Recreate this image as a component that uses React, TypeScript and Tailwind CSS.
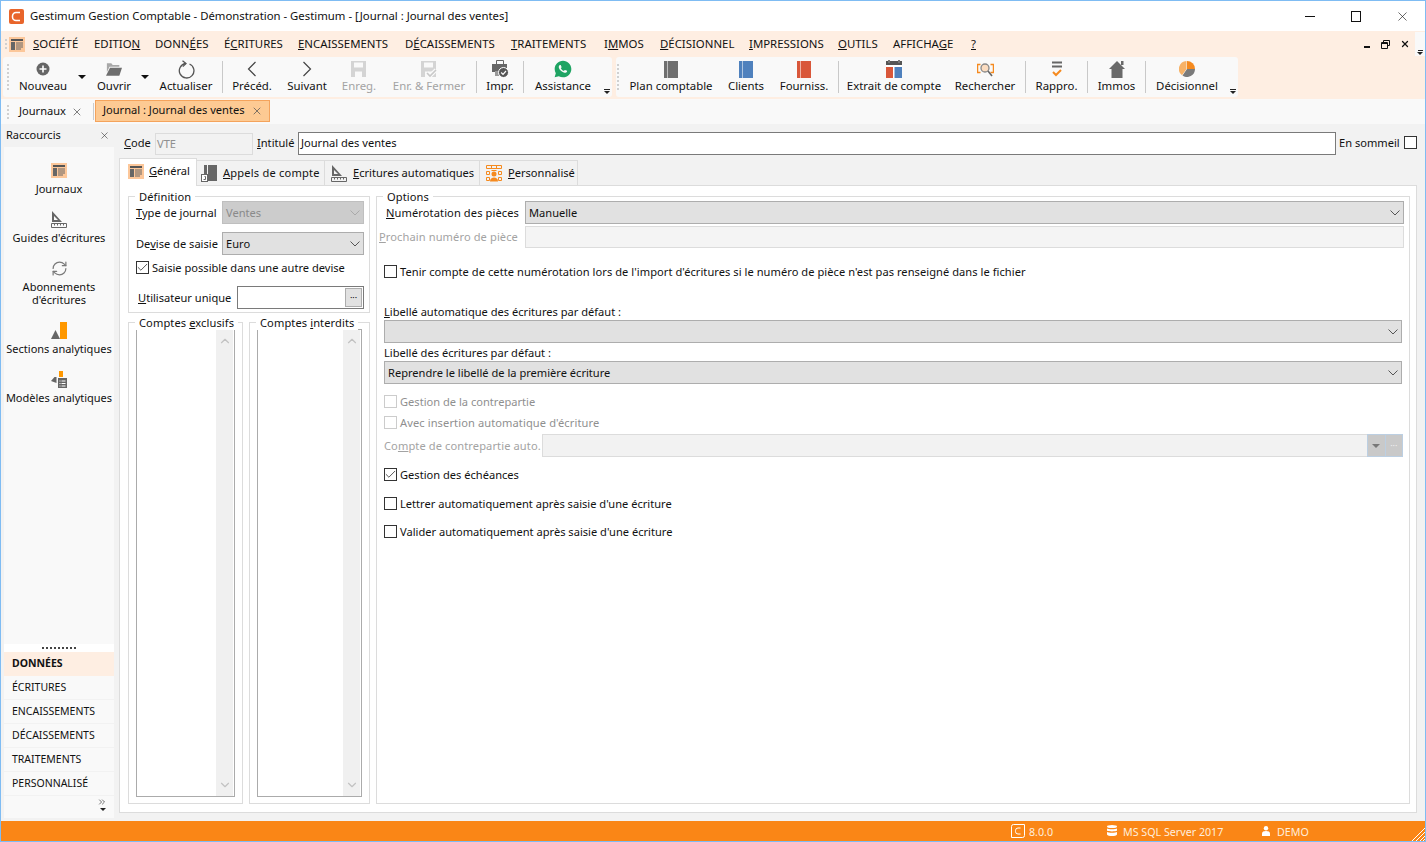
import React from 'react';
import { ChevronDown, ChevronUp, RefreshCw, X, Check, ChevronsRight } from 'lucide-react';
import { RiWhatsappFill } from 'react-icons/ri';

const JournalIcon = ({ solid = true }: { solid?: boolean }) => (
  <svg width="16" height="15" viewBox="0 0 16 15">
    {solid && <rect width="16" height="15" fill="#fcc79a" />}
    <rect x="2" y="2" width="12" height="2" fill="#555" />
    <rect x="2" y="5" width="4" height="8" fill="#666" />
    <path d="M7 6h7M7 8h7M7 10h7M7 12h5" stroke="#666" strokeWidth="1" />
  </svg>
);

const GuideIcon = () => (
  <svg width="16" height="17" viewBox="0 0 16 17">
    <path d="M1 0v11h10z M3 5v4h4z" fill="#666" fillRule="evenodd" />
    <path d="M.5 12.500h15v4H.5z" fill="none" stroke="#666" />
    <path d="M3.500 13v1.500M6.500 13v1.500M9.500 13v1.500M12.500 13v1.500" stroke="#666" />
  </svg>
);

const SectionsIcon = () => (
  <svg width="16" height="17" viewBox="0 0 16 17">
    <path d="M0 17l4.500-9 4.500 9z" fill="#666" />
    <rect x="9" y="0" width="7" height="17" fill="#ff9800" />
  </svg>
);

const ModelsIcon = () => (
  <svg width="16" height="17" viewBox="0 0 16 17">
    <rect x="8" y="0" width="4" height="6" fill="#ff9800" />
    <path d="M0 10l3.500-4 2 0v6z" fill="#666" />
    <rect x="7" y="7" width="9" height="10" fill="#666" />
    <path d="M8.500 10h1M10.500 10h4M8.500 12.500h1M10.500 12.500h4M8.500 15h1M10.500 15h4" stroke="#fff" />
  </svg>
);

const AppelsIcon = () => (
  <svg width="16" height="17" viewBox="0 0 16 17">
    <rect x="3" y="0" width="3" height="9" fill="#666" />
    <rect x="7" y="0" width="9" height="16" fill="#666" />
    <rect x="0.500" y="9.500" width="6" height="7" fill="#fff" stroke="#666" />
    <path d="M2.500 14.500h2v-3h-1" fill="none" stroke="#666" />
  </svg>
);

const PersoIcon = () => (
  <svg width="16" height="17" viewBox="0 0 16 17" fill="none" stroke="#f58a1f">
    <path d="M.5.500h15v3H.5zM5.500.5v3M10.500.5v3M.5 6.500h3v3h-3zM.5 12.500h3v3h-3zM12.500 6.500h3v3h-3zM12.500 12.500h3v3h-3z" />
    <circle cx="8" cy="9" r="2.500" fill="#f58a1f" stroke="none" />
    <path d="M4 16.500c0-3 2-4 4-4s4 1 4 4z" fill="#f58a1f" stroke="none" />
    <path d="M5.500 5.500h5" />
  </svg>
);

const PlusIcon = () => (
  <svg width="14" height="14" viewBox="0 0 14 14">
    <circle cx="7" cy="7" r="6.500" fill="#666" />
    <path d="M7 3.500v7M3.500 7h7" stroke="#fff" strokeWidth="1.600" />
  </svg>
);

const FolderIcon = () => (
  <svg width="16" height="13" viewBox="0 0 18 14">
    <path d="M1 0h5l1.500 2H15v2H4L1 10z" fill="#a8a8a8" />
    <path d="M4.500 5H18l-3 9H0z" fill="#6e6e6e" />
  </svg>
);

const ReloadIcon = () => (
  <svg width="19" height="19" viewBox="0 0 19 19" fill="none" stroke="#555" strokeWidth="1.300">
    <path d="M12.500 4A7.300 7.300 0 1 1 8.500 3.500" />
    <path d="M5.500.8l3.500 2.800-3.200 3" />
  </svg>
);

const ArrowIcon = ({ d }: { d: string }) => (
  <svg width="10" height="16" viewBox="0 0 10 16" fill="none" stroke="#444" strokeWidth="1.200">
    <path d={d} />
  </svg>
);

const SaveIcon = ({ tick = false }: { tick?: boolean }) => (
  <svg width="16" height="17" viewBox="0 0 16 17">
    <path d="M0 0h15v16H0z M3 1.500v5h9v-5z M4 10.500v5.500h7v-5.500z" fill="#d4d4d4" fillRule="evenodd" />
    {tick && (
      <>
        <path d="M6 12l3 3 6-6" fill="none" stroke="#f9f9f9" strokeWidth="4" />
        <path d="M6 12l3 3 6-6" fill="none" stroke="#c8c8c8" strokeWidth="1.600" />
      </>
    )}
  </svg>
);

const PrintIcon = () => (
  <svg width="17" height="18" viewBox="0 0 17 18">
    <path d="M4.500 4V.500h7V4" fill="none" stroke="#666" />
    <rect x="0" y="4" width="15" height="8" fill="#666" />
    <rect x="3" y="11" width="7" height="5" fill="#999" />
    <circle cx="11.500" cy="12.500" r="5" fill="#555" stroke="#fff" />
    <path d="M9.200 12.500l1.800 1.800 3-3.300" fill="none" stroke="#fff" strokeWidth="1.200" />
  </svg>
);

const BookIcon = ({ color }: { color: string }) => (
  <svg width="14" height="17" viewBox="0 0 14 17">
    <rect width="14" height="17" fill={color} />
    <rect x="3" width="1" height="17" fill="#fff" fillOpacity="0.55" />
  </svg>
);

const ExtractIcon = () => (
  <svg width="16" height="18" viewBox="0 0 16 18">
    <rect x="0" y="1" width="16" height="17" fill="#555" />
    <path d="M3 0v3M13 0v3" stroke="#777" strokeWidth="2" />
    <rect x="0" y="6" width="7" height="12" fill="#d9573a" />
    <rect x="8" y="6" width="8" height="12" fill="#4f81bd" />
    <rect x="0" y="5" width="16" height="2" fill="#fff" />
    <rect x="7" y="6" width="1.500" height="12" fill="#fff" />
  </svg>
);

const SearchIcon = () => (
  <svg width="17" height="15" viewBox="0 0 17 15" fill="none">
    <path d="M3.500 2.500h-3v8h3M13.500 2.500h3v8h-3" stroke="#f58a1f" strokeWidth="1.500" />
    <circle cx="8" cy="6" r="4" fill="#fbdcc0" stroke="#888" strokeWidth="1.300" />
    <path d="M11 9l4 5" stroke="#666" strokeWidth="1.600" />
  </svg>
);

const RapproIcon = () => (
  <svg width="12" height="17" viewBox="0 0 12 17" fill="none">
    <path d="M1 1.500h10M1 5.500h10" stroke="#666" strokeWidth="2" />
    <path d="M2 11l3 3 5-5" stroke="#f58a1f" strokeWidth="2" />
  </svg>
);

const HomeIcon = () => (
  <svg width="16" height="17" viewBox="0 0 16 17">
    <path d="M8 0l8 8h-2.500v9h-11V8H0z" fill="#6a6a6a" />
    <rect x="12" y="0" width="2.500" height="4" fill="#6a6a6a" />
  </svg>
);

const PieIcon = () => (
  <svg width="16" height="16" viewBox="0 0 16 16">
    <path d="M8 8V0a8 8 0 0 1 8 8z" fill="#f58a1f" />
    <path d="M8 8h8a8 8 0 0 1-12.500 6.600z" fill="#7a7a7a" />
    <path d="M7.500 8L3 14.300A8 8 0 0 1 7.500 0z" fill="#f7b267" />
  </svg>
);

const ComboChevron = ({ color }: { color: string }) => (
  <svg width="10" height="6" viewBox="0 0 10 6" fill="none" stroke={color} strokeWidth="1" className="shrink-0">
    <path d="M.5.500L5 5 9.500.5" />
  </svg>
);

const Grip = ({ h = 30 }: { h?: number }) => (
  <div className="w-[2px] flex flex-col gap-[2px] self-center">
    {Array.from({ length: Math.floor(h / 4) }).map((_, i) => (
      <div key={i} className="w-[2px] h-[2px] bg-[#d0d0d0]" />
    ))}
  </div>
);

const ToolSep = ({ className = '' }: { className?: string }) => (
  <div className={`w-px h-[32px] bg-[#c9c9c9] self-center shrink-0 ${className}`} />
);

const Caret = () => <div className="w-0 h-0 border-x-[4px] border-x-transparent border-t-[4px] border-t-[#111]" />;

const DropCaret = ({ w }: { w: string }) => (
  <div className={`${w} flex justify-center pt-[18px] shrink-0`}>
    <Caret />
  </div>
);

const Overflow = () => (
  <div className="w-[10px] shrink-0 flex flex-col items-center justify-end pb-[3px] gap-[1px]">
    <div className="w-[6px] h-px bg-[#222]" />
    <div className="w-0 h-0 border-x-[3px] border-x-transparent border-t-[3px] border-t-[#222]" />
  </div>
);

function ToolButton({ w, icon, label, disabled }: { w: string; icon: React.ReactNode; label: string; disabled?: boolean }) {
  return (
    <div className={`${w} shrink-0 flex flex-col items-center pt-[2px]`}>
      <div className="h-[20px] flex items-center justify-center">{icon}</div>
      <div className={`h-[14px] leading-[14px] whitespace-nowrap ${disabled ? 'text-[#a3a3a3]' : ''}`}>{label}</div>
    </div>
  );
}

function Shortcut({ icon, lines }: { icon: React.ReactNode; lines: string[] }) {
  return (
    <div className="flex flex-col items-center pb-[16px]">
      <div className="h-[17px] flex items-center justify-center">{icon}</div>
      <div className="mt-[3px] text-center leading-[13px] whitespace-nowrap">
        {lines.map((l) => (
          <div key={l}>{l}</div>
        ))}
      </div>
    </div>
  );
}

function GroupBox({ title, className = '', children }: { title: React.ReactNode; className?: string; children?: React.ReactNode }) {
  return (
    <div className={`relative border border-[#dcdcdc] ${className}`}>
      <div className="absolute -top-[7px] left-[6px] bg-white px-[4px] leading-[14px] whitespace-nowrap tracking-[0.1px]">{title}</div>
      {children}
    </div>
  );
}

function Combo({ className = '', children, disabled }: { className?: string; children?: React.ReactNode; disabled?: boolean }) {
  return (
    <div
      className={`h-[23px] flex items-center justify-between pl-[3px] pr-[3px] border ${
        disabled ? 'bg-[#cccccc] border-[#bfbfbf] text-[#8a8a8a]' : 'bg-[#e1e1e1] border-[#adadad]'
      } ${className}`}
    >
      <span className="pt-[2px]">{children}</span>
      <ComboChevron color={disabled ? '#aaaaaa' : '#555555'} />
    </div>
  );
}

function CheckRow({ label, checked, disabled, className = '' }: { label: string; checked?: boolean; disabled?: boolean; className?: string }) {
  return (
    <div className={`h-[13px] flex items-center gap-[3px] whitespace-nowrap ${disabled ? 'text-[#8f8f8f]' : ''} ${className}`}>
      <div className={`w-[13px] h-[13px] bg-white border flex items-center justify-center shrink-0 ${disabled ? 'border-[#cccccc]' : 'border-[#333333]'}`}>
        {checked && <Check size={13} strokeWidth={1.500} color="#333333" className="shrink-0" />}
      </div>
      <span className="pt-[2px]">{label}</span>
    </div>
  );
}

function ListBox({ w }: { w: string }) {
  return (
    <div className={`${w} h-full flex justify-end bg-white border border-[#ababab]`}>
      <div className="w-[17px] mr-px bg-[#f0f0f0] flex flex-col justify-between items-center py-[4px]">
        <ChevronUp size={14} strokeWidth={2} color="#c2c2c2" />
        <ChevronDown size={14} strokeWidth={2} color="#c2c2c2" />
      </div>
    </div>
  );
}

const menus: [string, React.ReactNode][] = [
  ['w-[61px]', <><u>S</u>OCIÉTÉ</>],
  ['w-[61px]', <>EDITIO<u>N</u></>],
  ['w-[69px]', <>DONN<u>É</u>ES</>],
  ['w-[74px]', <>É<u>C</u>RITURES</>],
  ['w-[107px]', <><u>E</u>NCAISSEMENTS</>],
  ['w-[106px]', <>D<u>É</u>CAISSEMENTS</>],
  ['w-[93px]', <><u>T</u>RAITEMENTS</>],
  ['w-[56px]', <>I<u>M</u>MOS</>],
  ['w-[89px]', <><u>D</u>ÉCISIONNEL</>],
  ['w-[89px]', <><u>I</u>MPRESSIONS</>],
  ['w-[55px]', <><u>O</u>UTILS</>],
  ['w-[78px]', <>AFFICHA<u>G</u>E</>],
  ['w-[12px]', <><u>?</u></>],
];

const sections = ['ÉCRITURES', 'ENCAISSEMENTS', 'DÉCAISSEMENTS', 'TRAITEMENTS', 'PERSONNALISÉ'];

export default function App() {
  return (
    <div className="w-[1426px] h-[842px] overflow-hidden flex flex-col border border-[#7fbcf3] bg-[#f2f2f2] text-[#111] text-[11.100px] font-['Noto_Sans',sans-serif]">
      {/* Title bar */}
      <div className="h-[30px] shrink-0 bg-white flex items-center pl-[8px]">
        <div className="w-[15px] h-[15px] rounded-[2px] bg-[#e8652b] flex items-center justify-center">
          <svg width="11" height="11" viewBox="0 0 11 11" fill="none">
            <path d="M9 1.500H5a3.500 3.500 0 0 0-3.500 3.500v1A3.500 3.500 0 0 0 5 9.500h4" stroke="#fff" strokeWidth="1.500" />
          </svg>
        </div>
        <span className="ml-[6px] text-[11.350px]">Gestimum Gestion Comptable - Démonstration - Gestimum - [Journal : Journal des ventes]</span>
        <div className="ml-auto flex">
          <div className="w-[46px] h-[30px] flex items-center justify-center">
            <div className="w-[10px] h-px bg-[#111]" />
          </div>
          <div className="w-[46px] h-[30px] flex items-center justify-center">
            <div className="w-[10px] h-[11px] border border-[#111]" />
          </div>
          <div className="w-[46px] h-[30px] flex items-center justify-center">
            <X size={15} strokeWidth={1} color="#111111" />
          </div>
        </div>
      </div>

      {/* Menu bar */}
      <div className="h-[26px] shrink-0 bg-[#feeee2] flex items-center pl-[4px] text-[11.400px]">
        <Grip h={14} />
        <div className="ml-[2px] mr-[8px] w-[16px] h-[15px] flex">
          <JournalIcon />
        </div>
        <div className="flex">
          {menus.map(([w, m], i) => (
            <div key={i} className={`${w} whitespace-nowrap`}>
              {m}
            </div>
          ))}
        </div>
        <div className="ml-auto flex items-center">
          <div className="w-[6px] h-[2px] bg-[#111] mt-[6px] mr-[11px]" />
          <svg width="9" height="9" viewBox="0 0 9 9" fill="none" stroke="#111" className="mr-[10px]">
            <path d="M2.500 2.500V.5h6v5H6.500M.5 2.500h6v6h-6zM.5 3.500h6" />
          </svg>
          <X size={10} strokeWidth={3} color="#111111" className="mr-[5px]" />
          <div className="w-[10px] h-[24px] bg-[#f9f9f9] flex items-end justify-center pb-[1px]">
            <div className="flex flex-col items-center gap-px">
              <div className="w-[5px] h-px bg-[#222]" />
              <div className="w-0 h-0 border-x-[3px] border-x-transparent border-t-[3px] border-t-[#222]" />
            </div>
          </div>
        </div>
      </div>

      {/* Toolbars */}
      <div className="h-[42px] shrink-0 bg-[#feeee2] flex pl-[2px] pb-[2px] text-[11.400px]">
        <div className="w-[609px] bg-[#f9f9f9] rounded-[3px] flex pl-[4px]">
          <div className="mr-px flex self-center">
            <Grip />
          </div>
          <ToolButton w="w-[66px]" icon={<PlusIcon />} label="Nouveau" />
          <DropCaret w="w-[12px]" />
          <ToolButton w="w-[52px]" icon={<FolderIcon />} label="Ouvrir" />
          <DropCaret w="w-[10px]" />
          <ToolButton w="w-[72px]" icon={<ReloadIcon />} label="Actualiser" />
          <ToolSep />
          <ToolButton w="w-[58px]" icon={<ArrowIcon d="M8.500 1L1.500 8l7 7" />} label="Précéd." />
          <ToolButton w="w-[52px]" icon={<ArrowIcon d="M1.500 1l7 7-7 7" />} label="Suivant" />
          <ToolButton w="w-[52px]" icon={<SaveIcon />} label="Enreg." disabled />
          <ToolButton w="w-[88px]" icon={<SaveIcon tick />} label="Enr. & Fermer" disabled />
          <ToolSep className="ml-[3px]" />
          <ToolButton w="w-[46px]" icon={<PrintIcon />} label="Impr." />
          <ToolSep />
          <ToolButton w="w-[78px]" icon={<RiWhatsappFill size={20} color="#1fa463" />} label="Assistance" />
          <Overflow />
        </div>
        <div className="ml-[4px] w-[622px] bg-[#f9f9f9] rounded-[3px] flex pl-px">
          <div className="mr-[3px] flex self-center">
            <Grip />
          </div>
          <ToolButton w="w-[98px]" icon={<BookIcon color="#6f6f6f" />} label="Plan comptable" />
          <ToolButton w="w-[52px]" icon={<BookIcon color="#4f81bd" />} label="Clients" />
          <ToolButton w="w-[64px]" icon={<BookIcon color="#d9573a" />} label="Fourniss." />
          <ToolSep className="ml-[2px]" />
          <ToolButton w="w-[110px]" icon={<ExtractIcon />} label="Extrait de compte" />
          <ToolButton w="w-[72px]" icon={<SearchIcon />} label="Rechercher" />
          <ToolSep className="ml-[4px]" />
          <ToolButton w="w-[61px]" icon={<RapproIcon />} label="Rappro." />
          <ToolSep />
          <ToolButton w="w-[57px]" icon={<HomeIcon />} label="Immos" />
          <ToolSep />
          <ToolButton w="w-[82px]" icon={<PieIcon />} label="Décisionnel" />
          <Overflow />
        </div>
      </div>

      {/* Document tabs */}
      <div className="h-[25px] shrink-0 bg-[#f9f9f9] flex items-center pl-[6px]">
        <Grip h={18} />
        <div className="ml-[10px] whitespace-nowrap w-[52px] pb-px">Journaux</div>
        <X size={12} strokeWidth={1.500} color="#555555" />
        <div className="ml-[10px] w-px h-[17px] bg-[#cccccc]" />
        <div className="ml-[1px] mb-[2px] w-[175px] h-[22px] bg-[#fdca93] border border-[#f4a35c] flex items-center pl-[7px]">
          <span className="whitespace-nowrap w-[148px]">Journal : Journal des ventes</span>
          <X size={12} strokeWidth={1.500} color="#555555" />
        </div>
      </div>

      {/* Main */}
      <div className="flex-1 min-h-0 flex">
        {/* Shortcuts sidebar */}
        <div className="w-[113px] shrink-0 flex flex-col pl-[3px] pb-[3px]">
          <div className="h-[23px] shrink-0 flex items-start justify-between pl-[2px] pr-[4px] pt-[4px] text-[11px] leading-[14px]">
            <span>Raccourcis</span>
            <X size={11} strokeWidth={1.300} color="#333333" className="mt-[2px]" />
          </div>
          <div className="flex-1 bg-[#f9f9f9] pt-[15px] text-[11px]">
            <Shortcut icon={<JournalIcon />} lines={['Journaux']} />
            <Shortcut icon={<GuideIcon />} lines={["Guides d'écritures"]} />
            <Shortcut icon={<RefreshCw size={17} strokeWidth={1.700} color="#7a7a7a" />} lines={['Abonnements', "d'écritures"]} />
            <Shortcut icon={<SectionsIcon />} lines={['Sections analytiques']} />
            <Shortcut icon={<ModelsIcon />} lines={['Modèles analytiques']} />
          </div>
          <div className="h-[8px] shrink-0 bg-white flex justify-center items-center gap-[2px]">
            {Array.from({ length: 9 }).map((_, i) => (
              <div key={i} className="w-[2px] h-[2px] bg-[#444]" />
            ))}
          </div>
          <div className="h-[24px] shrink-0 bg-[#feeee2] flex items-center pl-[8px] font-bold text-[10.500px]">DONNÉES</div>
          {sections.map((s) => (
            <div key={s} className="h-[24px] shrink-0 bg-[#f9f9f9] border-b border-[#f2f2f2] flex items-center pl-[8px] text-[10.500px]">
              {s}
            </div>
          ))}
          <div className="h-[22px] shrink-0 bg-[#f9f9f9] flex flex-col items-end pr-[7px] pt-[1px]">
            <ChevronsRight size={10} strokeWidth={1.500} color="#222222" />
            <div className="mr-[1px] mt-[1px] w-0 h-0 border-x-[3px] border-x-transparent border-t-[3px] border-t-[#222]" />
          </div>
        </div>

        {/* Form */}
        <div className="flex-1 min-w-0 flex flex-col pl-[5px] pr-[8px] pb-[8px]">
          <div className="h-[23px] mt-[8px] pl-[5px] shrink-0 flex items-center">
            <span className="w-[31px] whitespace-nowrap"><u>C</u>ode</span>
            <div className="w-[98px] h-[22px] bg-[#f2f2f2] border border-[#dcdcdc] pl-[1px] leading-[20px] text-[#8f8f8f]">VTE</div>
            <span className="ml-[4px] w-[41px] whitespace-nowrap"><u>I</u>ntitulé</span>
            <div className="w-[1038px] h-[23px] bg-white border border-[#7a7a7a] pl-[2px] leading-[20px]">Journal des ventes</div>
            <span className="ml-[3px] w-[65px] whitespace-nowrap -mt-px">En sommeil</span>
            <div className="w-[13px] h-[13px] bg-white border border-[#333333] -mt-[2px]" />
          </div>

          {/* Tabs */}
          <div className="h-[27px] mt-[3px] shrink-0 flex items-end relative z-10">
            <div className="w-[78px] h-[28px] -mb-px bg-white border-x border-t border-[#dcdcdc] flex items-center pl-[8px] pb-[2px]">
              <JournalIcon />
              <span className="ml-[5px]"><u>G</u>énéral</span>
            </div>
            <div className="w-[128px] h-[25px] bg-[#f2f2f2] border-r border-t border-[#dcdcdc] flex items-center pl-[4px]">
              <AppelsIcon />
              <span className="ml-[6px] tracking-[0.2px]"><u>A</u>ppels de compte</span>
            </div>
            <div className="w-[155px] h-[25px] bg-[#f2f2f2] border-r border-t border-[#dcdcdc] flex items-center pl-[6px]">
              <GuideIcon />
              <span className="ml-[6px]"><u>E</u>critures automatiques</span>
            </div>
            <div className="w-[98px] h-[25px] bg-[#f2f2f2] border-r border-t border-[#dcdcdc] flex items-center pl-[6px]">
              <PersoIcon />
              <span className="ml-[6px]"><u>P</u>ersonnalisé</span>
            </div>
          </div>

          {/* Tab panel */}
          <div className="flex-1 min-h-0 bg-white border border-[#dcdcdc] flex pl-[8px] pr-[6px] pt-[10px] pb-[8px] gap-[6px]">
            <div className="w-[242px] shrink-0 flex flex-col gap-[9px]">
              <GroupBox title="Définition" className="h-[117px] shrink-0 pl-[7px] pr-[5px] pt-[4px]">
                <div className="flex items-center justify-between">
                  <span className="whitespace-nowrap pt-[2px]"><u>T</u>ype de journal</span>
                  <Combo disabled className="w-[142px]">Ventes</Combo>
                </div>
                <div className="mt-[8px] flex items-center justify-between">
                  <span className="whitespace-nowrap pt-[2px]">De<u>v</u>ise de saisie</span>
                  <Combo className="w-[142px]">Euro</Combo>
                </div>
                <CheckRow checked label="Saisie possible dans une autre devise" className="mt-[6px]" />
                <div className="mt-[12px] flex items-center justify-between">
                  <span className="ml-[2px] whitespace-nowrap pt-[2px]"><u>U</u>tilisateur unique</span>
                  <div className="w-[127px] h-[23px] bg-white border border-[#7a7a7a] flex justify-end p-px">
                    <div className="w-[17px] bg-[#e1e1e1] border border-[#adadad] flex items-center justify-center text-[9px] leading-[10px]">···</div>
                  </div>
                </div>
              </GroupBox>
              <div className="flex-1 min-h-0 flex gap-[6px]">
                <GroupBox title={<>Comptes <u>e</u>xclusifs</>} className="w-[115px] pl-[7px] pt-[6px] pb-[6px]">
                  <ListBox w="w-[99px]" />
                </GroupBox>
                <GroupBox title={<>Comptes <u>i</u>nterdits</>} className="w-[121px] pl-[7px] pt-[6px] pb-[6px]">
                  <ListBox w="w-[105px]" />
                </GroupBox>
              </div>
            </div>

            <GroupBox title="Options" className="flex-1 min-w-0">
              <div className="mt-[4px] ml-[9px] mr-[5px] flex items-center">
                <span className="w-[139px] whitespace-nowrap pt-[2px] tracking-[0.1px]"><u>N</u>umérotation des pièces</span>
                <Combo className="flex-1">Manuelle</Combo>
              </div>
              <div className="mt-[2px] ml-[2px] mr-[5px] flex items-center text-[#a3a3a3]">
                <span className="w-[146px] whitespace-nowrap tracking-[0.1px]"><u>P</u>rochain numéro de pièce</span>
                <div className="flex-1 h-[22px] bg-[#f4f4f4] border border-[#dcdcdc]" />
              </div>
              <CheckRow label="Tenir compte de cette numérotation lors de l'import d'écritures si le numéro de pièce n'est pas renseigné dans le fichier" className="mt-[17px] ml-[7px] tracking-[0.05px]" />
              <div className="mt-[26px] ml-[7px] h-[16px] leading-[16px]"><u>L</u>ibellé automatique des écritures par défaut :</div>
              <Combo className="ml-[7px] mr-[7px]" />
              <div className="mt-[2px] ml-[7px] h-[16px] leading-[16px]">Libellé des écritures par défaut :</div>
              <Combo className="ml-[7px] mr-[7px]">Reprendre le libellé de la première écriture</Combo>
              <CheckRow disabled label="Gestion de la contrepartie" className="mt-[11px] ml-[7px]" />
              <CheckRow disabled label="Avec insertion automatique d'écriture" className="mt-[8px] ml-[7px] tracking-[0.1px]" />
              <div className="mt-[5px] ml-[7px] mr-[6px] flex items-center text-[#a3a3a3]">
                <span className="w-[158px] whitespace-nowrap pt-[2px] tracking-[0.1px]">Co<u>m</u>pte de contrepartie auto.</span>
                <div className="flex-1 h-[23px] bg-[#f2f2f2] border border-[#dcdcdc] flex justify-end">
                  <div className="w-[36px] -my-px -mr-px bg-[#bccfe2] flex gap-px p-px">
                    <div className="flex-1 bg-[#c9c9c9] flex items-center justify-center">
                      <div className="w-0 h-0 border-x-[4px] border-x-transparent border-t-[4px] border-t-[#777]" />
                    </div>
                    <div className="flex-1 bg-[#c9c9c9] flex items-center justify-center text-[#eeeeee] text-[9px]">···</div>
                  </div>
                </div>
              </div>
              <CheckRow checked label="Gestion des échéances" className="mt-[11px] ml-[7px]" />
              <CheckRow label="Lettrer automatiquement après saisie d'une écriture" className="mt-[16px] ml-[7px]" />
              <CheckRow label="Valider automatiquement après saisie d'une écriture" className="mt-[15px] ml-[7px]" />
            </GroupBox>
          </div>
        </div>
      </div>

      {/* Status bar */}
      <div className="h-[20px] shrink-0 bg-[#fa8616] flex items-center pl-[1010px] text-[#ffeedd] text-[10.700px]">
        <div className="w-[96px] flex items-center gap-[4px]">
          <svg width="14" height="14" viewBox="0 0 14 14" fill="none" stroke="#fff">
            <path d="M.5 2.500a2 2 0 0 1 2-2h11v11a2 2 0 0 1-2 2h-11z" />
            <path d="M9.500 4H7a2.500 2.500 0 0 0-2.500 2.500v1A2.500 2.500 0 0 0 7 10h2.500" />
          </svg>
          <span className="pt-[2px]">8.0.0</span>
        </div>
        <div className="w-[155px] flex items-center gap-[6px]">
          <svg width="10" height="11" viewBox="0 0 10 11" fill="#fff">
            <ellipse cx="5" cy="1.500" rx="5" ry="1.500" />
            <path d="M0 3.500c1 1 9 1 10 0v2c-1 1.200-9 1.200-10 0zM0 7c1 1 9 1 10 0v2.500c-1 2-9 2-10 0z" />
          </svg>
          <span className="pt-[2px]">MS SQL Server 2017</span>
        </div>
        <div className="flex items-center gap-[7px]">
          <svg width="8" height="10" viewBox="0 0 8 10" fill="#fff">
            <circle cx="4" cy="2.200" r="2.200" />
            <path d="M0 10V7.500C0 5.800 1.500 5 4 5s4 .8 4 2.500V10z" />
          </svg>
          <span className="pt-[2px]">DEMO</span>
        </div>
        <svg width="13" height="13" viewBox="0 0 13 13" stroke="#fff" className="ml-auto mt-[6px]">
          <path d="M0 13L13 0M4 13l9-9M8 13l5-5M11 13l2-2" />
        </svg>
      </div>
    </div>
  );
}
